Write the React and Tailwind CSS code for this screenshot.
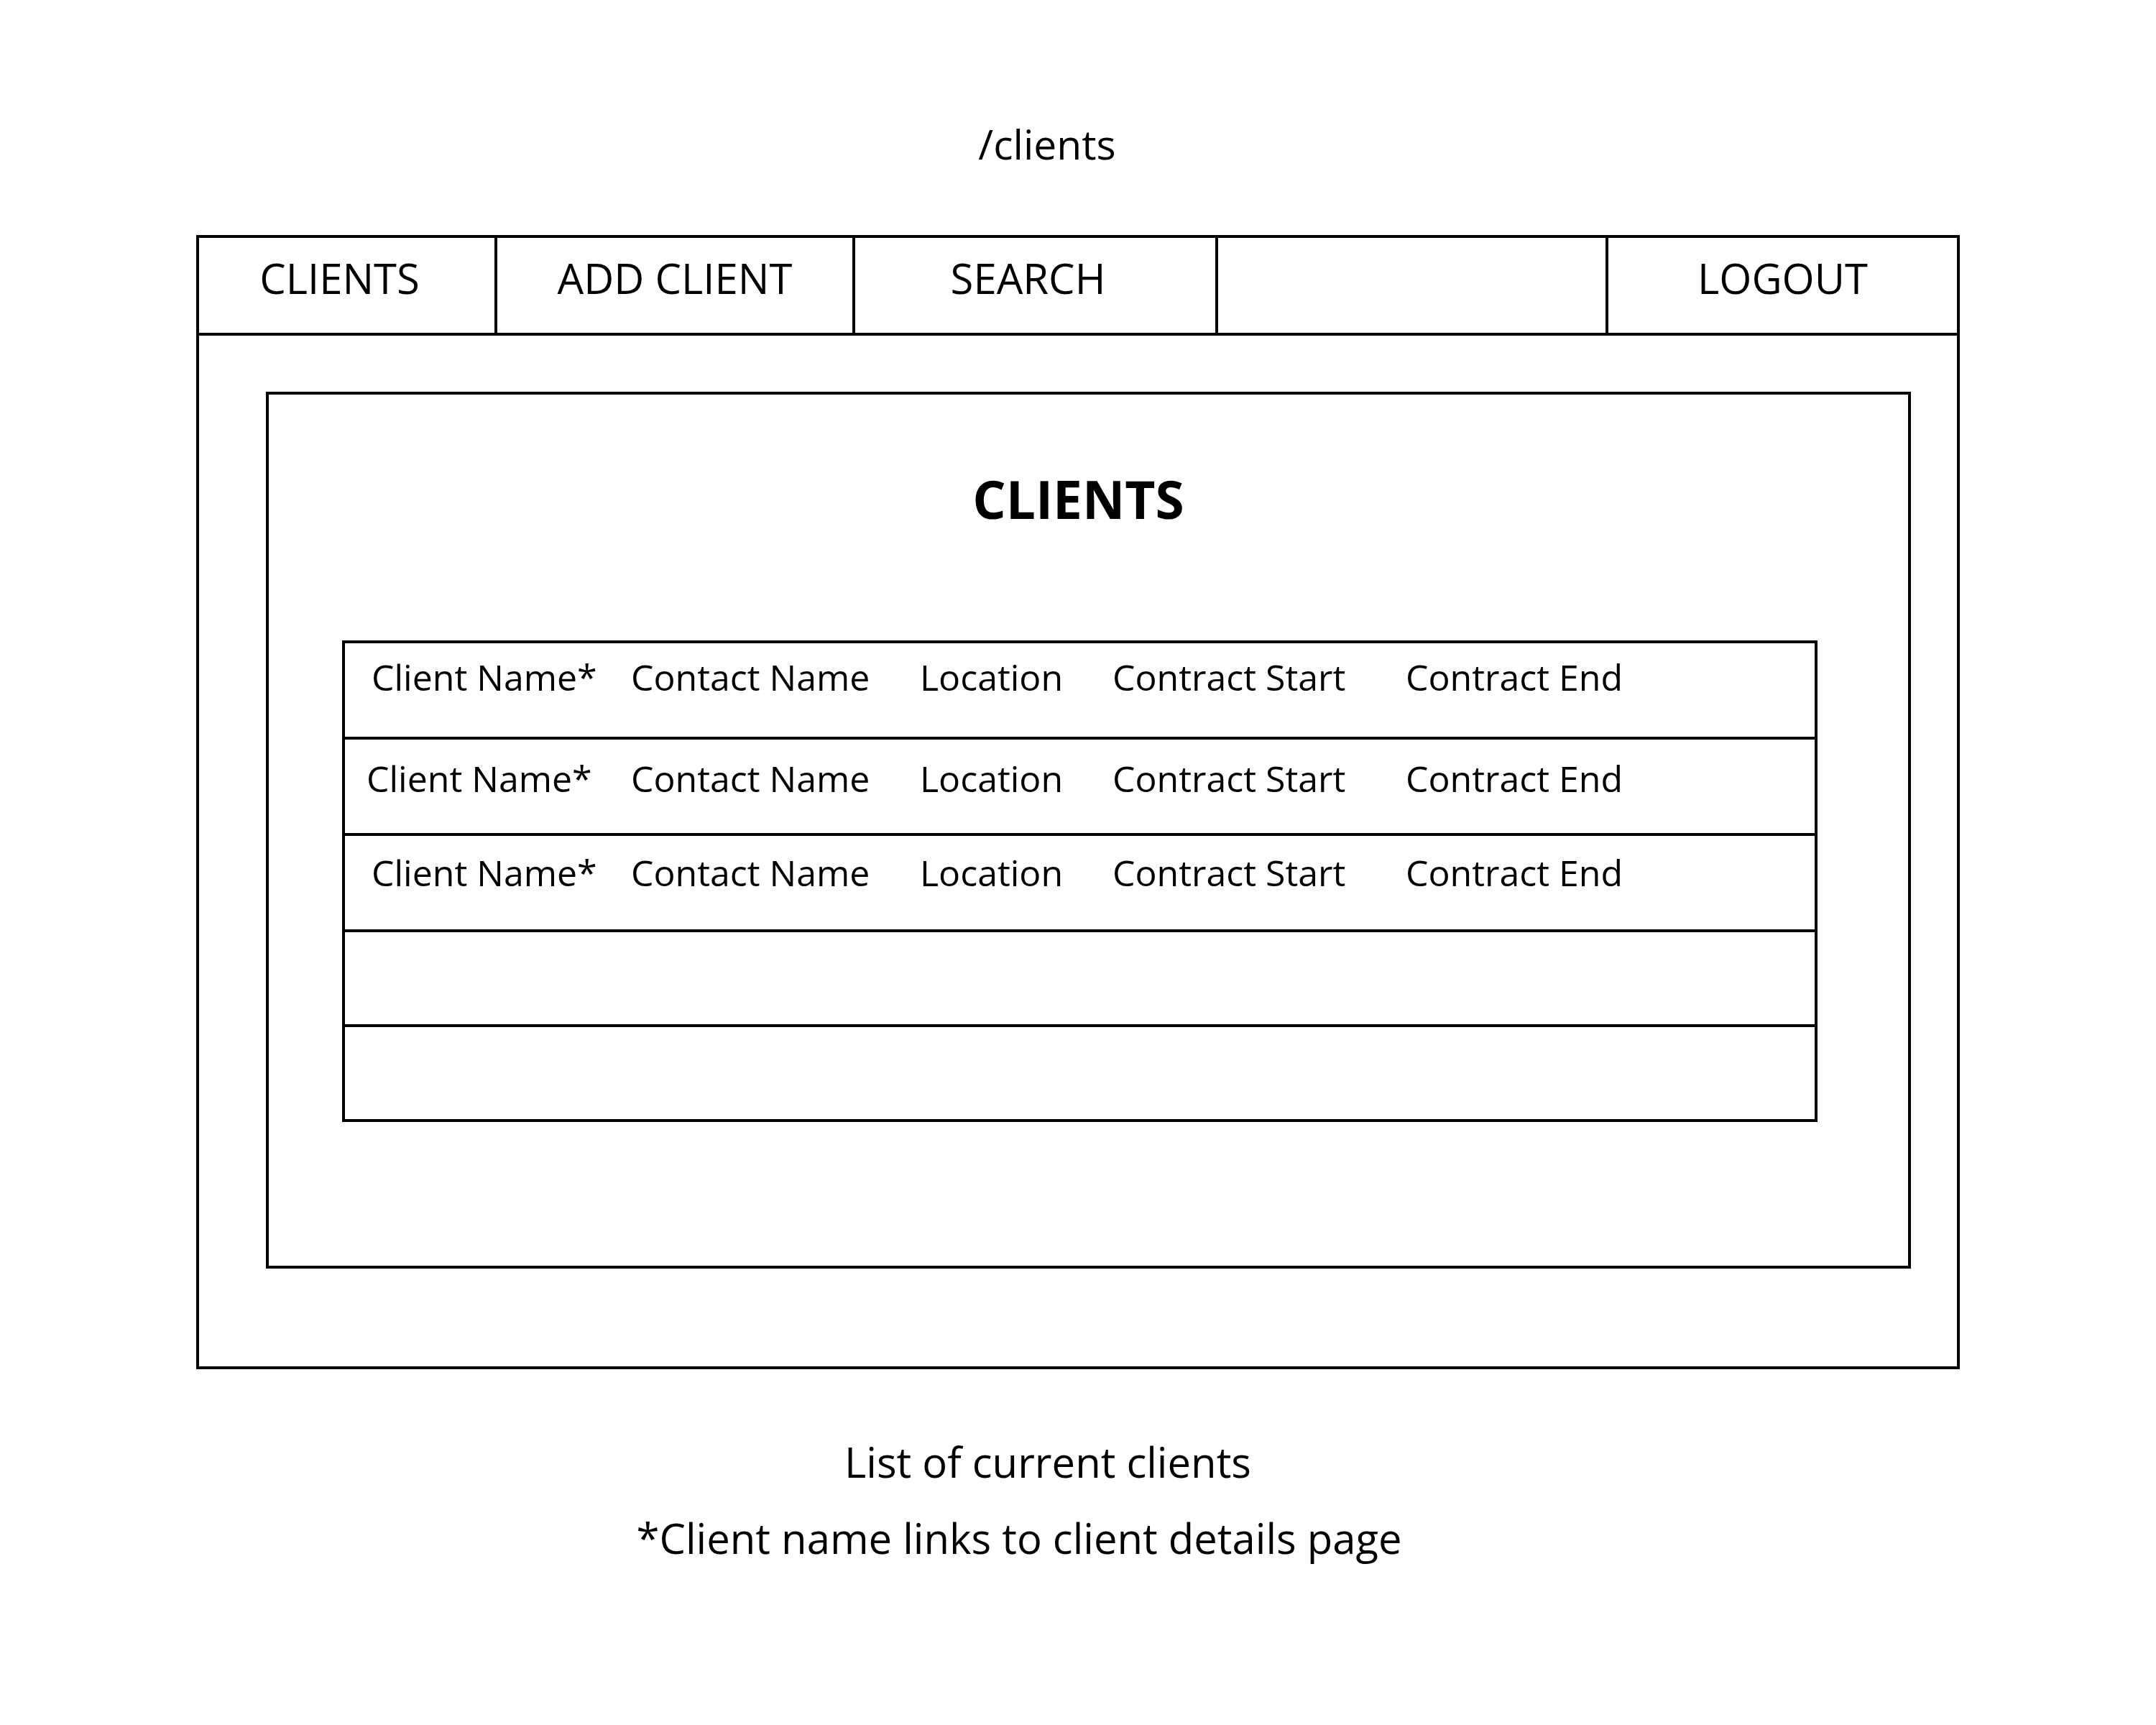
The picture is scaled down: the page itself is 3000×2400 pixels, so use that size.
const NAV = [
  { label: 'CLIENTS', w: 'w-[415px] border-r-4 pr-[20px]' },
  { label: 'ADD CLIENT', w: 'w-[498px] border-r-4' },
  { label: 'SEARCH', w: 'w-[505px] border-r-4 pr-[20px]' },
  { label: '', w: 'w-[543px] border-r-4' },
  { label: 'LOGOUT', w: 'w-[485px]' },
];

// heights include the bottom divider (border-box)
const ROWS = [
  { filled: true, h: 'h-[134px] pt-[22px]', first: 'w-[398px] pl-[37px]' },
  { filled: true, h: 'h-[134px] pt-[29px]', first: 'w-[398px] pl-[30px]' },
  { filled: true, h: 'h-[134px] pt-[26px]', first: 'w-[398px] pl-[37px]' },
  { filled: false, h: 'h-[132px]' },
  { filled: false, h: 'h-[128px]' },
];

function Row({ row, last }) {
  return (
    <div className={`${row.h} flex items-start text-[50px] leading-none ${last ? '' : 'border-b-4 border-black'}`}>
      {row.filled && (
        <>
          <span className={row.first}>Client Name*</span>
          <span className="w-[402px]">Contact Name</span>
          <span className="w-[268px]">Location</span>
          <span className="w-[408px]">Contract Start</span>
          <span>Contract End</span>
        </>
      )}
    </div>
  );
}

export default function App() {
  return (
    <div
      className="w-[3000px] h-[2400px] bg-white text-black"
      style={{ fontFamily: '"Open Sans", "Liberation Sans", sans-serif' }}
    >
      <div className="w-[2914px] pt-[172px] text-center text-[57px] leading-none">/clients</div>

      <div className="ml-[273px] mt-[98px] w-[2454px] h-[1578px] border-4 border-black">
        <nav className="flex h-[136px] border-b-4 border-black">
          {NAV.map((n, i) => (
            <div
              key={i}
              className={`${n.w} border-black flex justify-center items-start pt-[27px] text-[58px] leading-none`}
            >
              {n.label}
            </div>
          ))}
        </nav>

        <div className="ml-[93px] mt-[78px] w-[2289px] h-[1220px] border-4 border-black">
          <h1 className="mt-[108px] pr-[28px] text-center text-[73px] font-bold leading-none">CLIENTS</h1>

          <div className="ml-[102px] mt-[161px] w-[2053px] border-4 border-black">
            {ROWS.map((r, i) => (
              <Row key={i} row={r} last={i === ROWS.length - 1} />
            ))}
          </div>
        </div>
      </div>

      <div className="w-[2916px] mt-[100px] text-center text-[58px] leading-none">List of current clients</div>
      <div className="w-[2836px] mt-[48px] text-center text-[58px] leading-none">
        *Client name links to client details page
      </div>
    </div>
  );
}
